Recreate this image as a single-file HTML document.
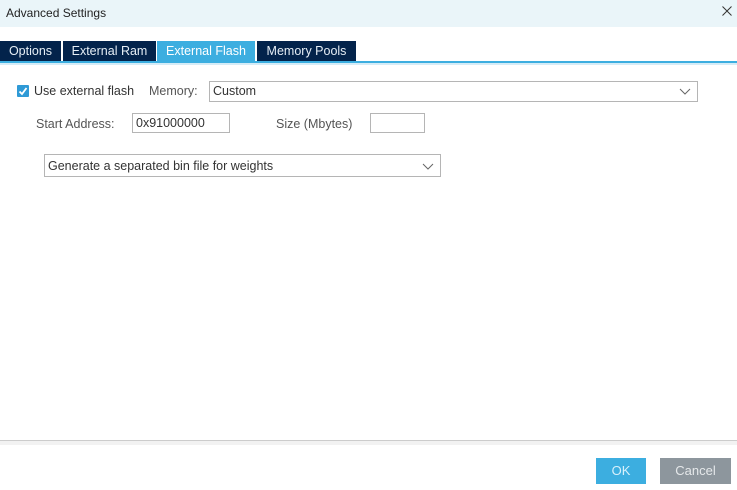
<!DOCTYPE html>
<html><head><style>
body{margin:0;width:737px;height:490px;background:#fff;font-family:"Liberation Sans",sans-serif;position:relative;overflow:hidden;font-size:12px;color:#333}
.a{position:absolute}
.title{left:0;top:0;width:737px;height:27px;background:#eaf5f9}
.tab{top:41px;height:20px;background:#03234b;color:#e6eef5;font-size:12.5px;line-height:20px;text-align:center}
.inp{border:1px solid #b5b5b5;background:#fff;height:19px;box-sizing:border-box;line-height:17px;padding-left:3px;font-size:12.5px}
.chev{position:absolute;right:6px;top:3px}
</style></head><body>
<div class="a title"></div>
<div class="a" style="left:6px;top:6px;font-size:12px;color:#222">Advanced Settings</div>
<svg class="a" style="left:722px;top:6px" width="10" height="10"><path d="M0.5 0.5L9.5 9.5M9.5 0.5L0.5 9.5" stroke="#333" stroke-width="1"/></svg>
<div class="a tab" style="left:0;width:61px">Options</div>
<div class="a tab" style="left:63px;width:93px">External Ram</div>
<div class="a tab" style="left:157px;width:98px;background:#3caee0;color:#fff">External Flash</div>
<div class="a tab" style="left:257px;width:99px">Memory Pools</div>
<div class="a" style="left:0;top:61px;width:737px;height:2px;background:#3caee0"></div>
<div class="a" style="left:0;top:63px;width:737px;height:2px;background:#d5ecf7"></div>
<div class="a" style="left:17px;top:85px;width:12px;height:12px;background:#2f9ad6;border-radius:1px"><svg width="12" height="12"><path d="M2.5 6.5L5 9 9.5 3" stroke="#fff" stroke-width="1.8" fill="none"/></svg></div>
<div class="a" style="left:34px;top:84px;font-size:12.5px">Use external flash</div>
<div class="a" style="left:149px;top:84px;font-size:12.5px;color:#555">Memory:</div>
<div class="a inp" style="left:209px;top:81px;width:489px;height:21px;line-height:19px">Custom<svg class="chev" width="12" height="12"><path d="M1 4l5 5 5-5" stroke="#666" fill="none"/></svg></div>
<div class="a" style="left:36px;top:117px;font-size:12.5px;color:#555">Start Address:</div>
<div class="a inp" style="left:132px;top:113px;width:98px;height:20px;line-height:18px">0x91000000</div>
<div class="a" style="left:276px;top:117px;font-size:12.5px;color:#555">Size (Mbytes)</div>
<div class="a inp" style="left:370px;top:113px;width:55px;height:20px"></div>
<div class="a inp" style="left:44px;top:154px;width:397px;height:23px;line-height:22px">Generate a separated bin file for weights<svg class="chev" style="top:5px" width="12" height="12"><path d="M1 4l5 5 5-5" stroke="#666" fill="none"/></svg></div>
<div class="a" style="left:0;top:440px;width:737px;height:1px;background:#ccc"></div>
<div class="a" style="left:0;top:441px;width:737px;height:4px;background:#f2f2f2"></div>
<div class="a" style="left:596px;top:458px;width:50px;height:26px;background:#3caee0;color:#d8f0fb;font-size:13px;line-height:26px;text-align:center">OK</div>
<div class="a" style="left:660px;top:458px;width:71px;height:26px;background:#8d969d;color:#e5e8ea;font-size:13px;line-height:26px;text-align:center">Cancel</div>
</body></html>
